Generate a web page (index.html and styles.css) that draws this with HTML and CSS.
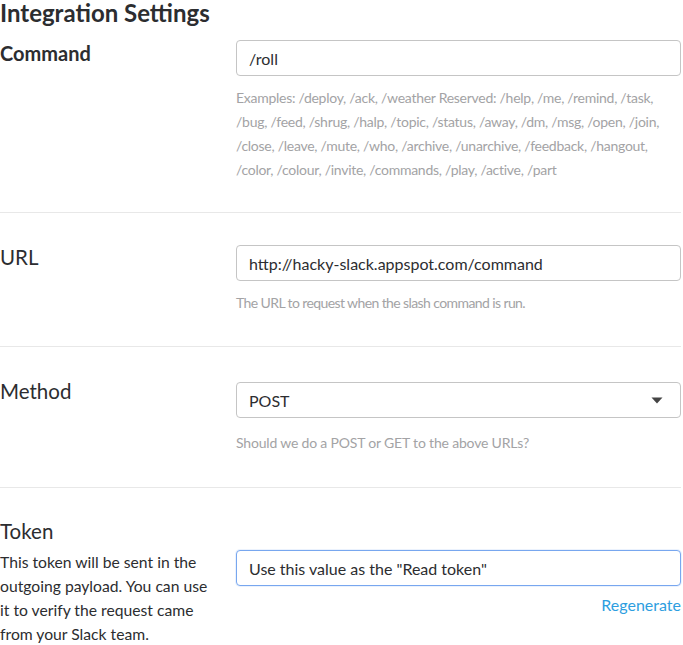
FILE: index.html
```html
<!DOCTYPE html>
<html lang="en">
<head>
<meta charset="utf-8">
<title>Integration Settings</title>
<link rel="stylesheet" href="styles.css">
</head>
<body>
<div class="page">
  <h1 class="title">Integration Settings</h1>

  <section class="row row-command">
    <div class="label-col"><h2 class="label label-bold">Command</h2></div>
    <div class="field-col">
      <div class="input">/roll</div>
      <p class="help help-examples">Examples: /deploy, /ack, /weather Reserved: /help, /me, /remind, /task, /bug, /feed, /shrug, /halp, /topic, /status, /away, /dm, /msg, /open, /join, /close, /leave, /mute, /who, /archive, /unarchive, /feedback, /hangout, /color, /colour, /invite, /commands, /play, /active, /part</p>
    </div>
  </section>

  <section class="row row-url">
    <div class="label-col"><h2 class="label">URL</h2></div>
    <div class="field-col">
      <div class="input">http://hacky-slack.appspot.com/command</div>
      <p class="help help-url">The URL to request when the slash command is run.</p>
    </div>
  </section>

  <section class="row row-method">
    <div class="label-col"><h2 class="label">Method</h2></div>
    <div class="field-col">
      <div class="input select">
        <span>POST</span>
        <svg class="caret" width="12" height="7" viewBox="0 0 12 7"><path d="M0.5 0.5 H11.5 L6 6.5 Z" fill="#444"/></svg>
      </div>
      <p class="help help-method">Should we do a POST or GET to the above URLs?</p>
    </div>
  </section>

  <section class="row row-token">
    <div class="label-col">
      <h2 class="label">Token</h2>
      <p class="desc">This token will be sent in the outgoing payload. You can use it to verify the request came from your Slack team.</p>
    </div>
    <div class="field-col token-field">
      <div class="input input-focus">Use this value as the "Read token"</div>
      <a class="regen" href="#">Regenerate</a>
    </div>
  </section>
</div>
</body>
</html>
```

FILE: styles.css
```css
* { box-sizing: border-box; }

html, body {
  margin: 0;
  padding: 0;
  background: #fff;
}

body {
  font-family: Lato, "Open Sans", "Liberation Sans", sans-serif;
  color: #2c2d30;
}

.page {
  width: 681px;
}

.title {
  margin: 0;
  padding-top: 1px;
  font-size: 24px;
  line-height: 24px;
  font-weight: 700;
  color: #2c2d30;
}

.row {
  display: grid;
  grid-template-columns: 236px 445px;
  border-bottom: 1px solid #e8e8e8;
}

.row-command { padding: 15px 0 30px; }
.row-url { padding: 32px 0 31px; }
.row-method { padding: 35px 0 32px; }
.row-token { padding: 31px 0 0; border-bottom: none; }

.label {
  margin: 0;
  font-size: 20.5px;
  line-height: 24px;
  font-weight: 400;
  color: #2c2d30;
}

.label-bold { font-weight: 700; font-size: 20px; }

.row-command .label { margin-top: 1px; }
.row-url .label { margin-top: 0; }
.row-method .label { margin-top: -3px; }

.input {
  height: 36px;
  border: 1px solid #c5c5c5;
  border-radius: 4px;
  padding: 0 12px;
  display: flex;
  align-items: center;
  font-size: 16px;
  color: #2c2d30;
  background: #fff;
}

.select {
  justify-content: space-between;
  padding-right: 17px;
}

.caret { display: block; }

.input-focus {
  border-color: #78a7ef;
  box-shadow: 0 0 0 1px rgba(120, 167, 239, 0.15);
}

.help {
  margin: 10px 0 0;
  font-size: 14px;
  line-height: 24px;
  color: #a3a3a5;
}

.help-examples { letter-spacing: -0.27px; }
.help-url { letter-spacing: -0.6px; }
.help-method { margin-top: 13px; letter-spacing: -0.18px; }

.desc {
  margin: 7px 0 0;
  font-size: 15.7px;
  line-height: 24px;
  color: #2c2d30;
  padding-right: 18px;
}

.token-field {
  display: flex;
  flex-direction: column;
  align-items: stretch;
  padding-top: 31px;
}

.regen {
  align-self: flex-end;
  margin-top: 7px;
  font-size: 16px;
  line-height: 24px;
  color: #2d9ee0;
  text-decoration: none;
}
```
